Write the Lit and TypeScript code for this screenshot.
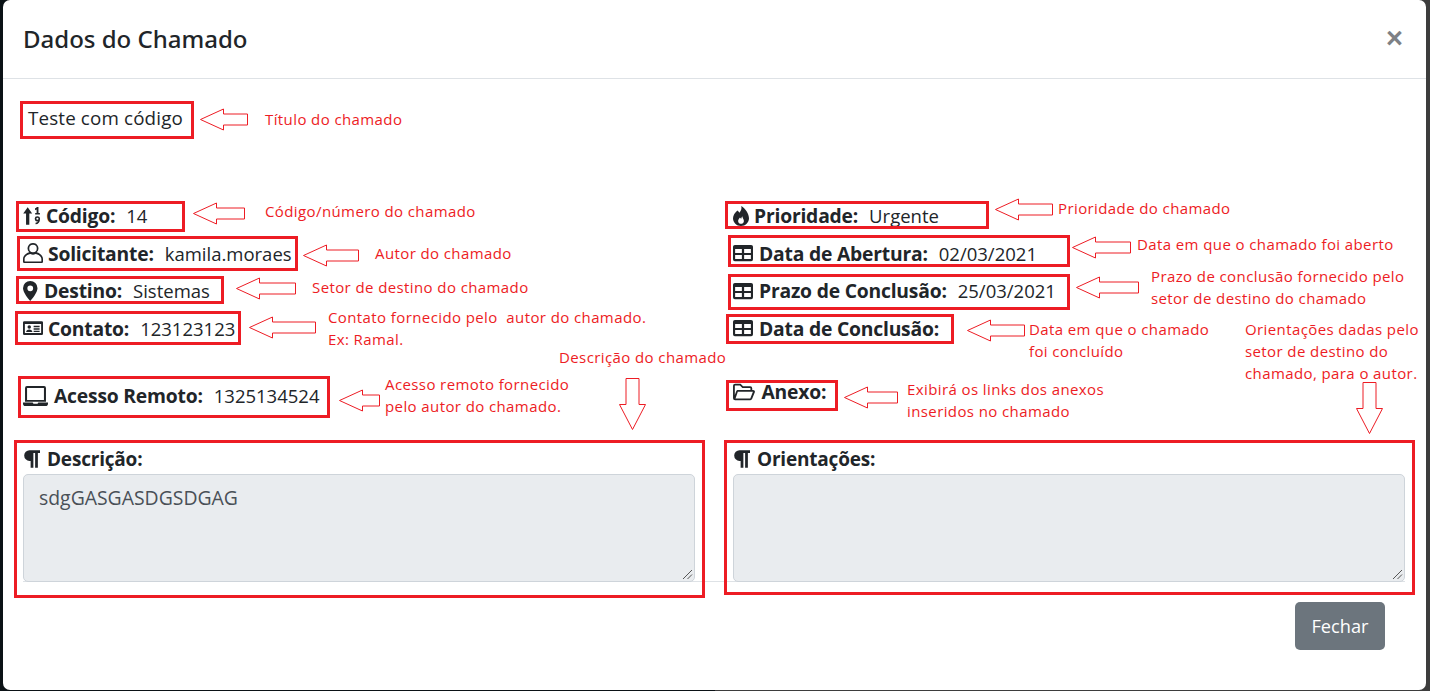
import { LitElement, html, css, svg } from "lit";
import { customElement } from "lit/decorators.js";

type Icon = { w: number; h: number; vb: string; mr: number; d: unknown };

const ICONS: Record<string, Icon> = {
  sort: { w: 17, h: 20, vb: "0 0 14.5 16", mr: 6, d: svg`<path d="M4 .6 L7.8 5.8 H5.4 V15.400 H2.6 V5.800 H.2 Z"/><path d="M10.2 1.600 L12 .4 H13.2 V5.400 H14.400 V6.800 H10.400 V5.400 H11.600 V2.400 L10.400 3 Z"/><path fill-rule="evenodd" d="M12.300 8.200a2.200 2.200 0 0 1 2.200 2.500c0 2.500-1.400 4.300-3.800 4.300v-1.300c1 0 1.800-.4 2.200-1.200a2.200 2.200 0 1 1-.6-4.300zm0 1.300a.9.9 0 1 0 0 1.800.9.9 0 0 0 0-1.800z"/>` },
  user: { w: 20, h: 20, vb: "0 0 16 16", mr: 5, d: svg`<path fill-rule="evenodd" d="M8 0a4.300 4.300 0 0 1 3 7.400c2.600.8 5 2.900 5 5.400V15a1 1 0 0 1-1 1H1a1 1 0 0 1-1-1v-2.200c0-2.500 2.400-4.600 5-5.400A4.300 4.300 0 0 1 8 0zm0 1.300a3 3 0 1 0 0 6 3 3 0 0 0 0-6zM6 8.800c-2.400.4-4.700 1.900-4.700 4V14.700h13.400V12.800c0-2.100-2.300-3.600-4.700-4-1.200.7-2.800.7-4 0z"/>` },
  pin: { w: 14.500, h: 20, vb: "2.200 0 11.600 16", mr: 6.500, d: svg`<path fill-rule="evenodd" d="M8 0a5.800 5.800 0 0 1 5.800 5.800C13.800 9 9.500 14.500 8 16 6.500 14.500 2.200 9 2.200 5.800A5.800 5.800 0 0 1 8 0zm0 3.500a2.300 2.300 0 1 0 0 4.600 2.300 2.300 0 0 0 0-4.600z"/>` },
  card: { w: 20, h: 20, vb: "0 0 16 16", mr: 5, d: svg`<path fill-rule="evenodd" d="M1 2.500h14a1 1 0 0 1 1 1v9a1 1 0 0 1-1 1H1a1 1 0 0 1-1-1v-9a1 1 0 0 1 1-1zM1.500 4.800v7.200H14.500V4.800zM5 5.800a1.400 1.400 0 1 1 0 2.800A1.400 1.400 0 0 1 5 5.800zM2.500 11.200c0-1.300 1.100-2.100 2.500-2.100s2.500.8 2.500 2.100zM8.500 6.200h4.800v1.100H8.500zM8.500 8.200h4.800v1.100H8.500zM8.500 10.200h4.800v1H8.500z"/>` },
  laptop: { w: 25, h: 20, vb: "0 1 16 12.800", mr: 6, d: svg`<path fill-rule="evenodd" d="M2.500 1h11a1.200 1.200 0 0 1 1.200 1.200V11H1.300V2.200A1.200 1.200 0 0 1 2.500 1zm.1 1.300V9.900h10.800V2.300z"/><path d="M0 11.600h6.200l.5.7h2.600l.5-.7H16v.7c0 .8-.7 1.500-1.500 1.500h-13C.7 13.800 0 13.100 0 12.300z"/>` },
  fire: { w: 16, h: 20, vb: "1.600 0 12.800 16", mr: 5, d: svg`<path fill-rule="evenodd" d="M8.200 0c.6 2.500-.3 3.900-1.500 5.300-.4-.8-.9-1.300-1.600-1.800C3.200 5.300 1.600 7.300 1.600 9.800 1.600 13.300 4.500 16 8 16s6.400-2.700 6.400-6.200C14.400 5.900 11.400 2 8.200 0zM8 14.200c-1.300 0-2.300-1-2.300-2.300 0-1.100.8-1.700 1.500-2.700.3.500.5.800 1 1 .2-.9.400-1.400.8-2 .2 1.500 1.300 2.400 1.300 3.700C10.300 13.200 9.300 14.200 8 14.200z"/>` },
  table: { w: 20, h: 20, vb: "0 0 16 16", mr: 6, d: svg`<path fill-rule="evenodd" d="M1.500 1.500h13A1.500 1.500 0 0 1 16 3v10a1.500 1.500 0 0 1-1.500 1.500h-13A1.500 1.500 0 0 1 0 13V3a1.500 1.500 0 0 1 1.500-1.500zM1.700 4.800v3.100h5.400V4.800zm7.200 0v3.100h5.400V4.800zM1.700 9.500v3.300h5.400V9.500zm7.200 0v3.300h5.400V9.500z"/>` },
  folder: { w: 22, h: 20, vb: "0 .7 16 14.600", mr: 6.500, d: svg`<path fill-rule="evenodd" d="M1.500 2h4l1.800 1.800h5.200A1.500 1.500 0 0 1 14 5.300V6.500h.7c.9 0 1.500.9 1.200 1.700l-2 5a1.400 1.400 0 0 1-1.300.8H1.500A1.500 1.500 0 0 1 0 12.500v-9A1.500 1.500 0 0 1 1.500 2zm0 1.300a.2.200 0 0 0-.2.200v6.700l1-2.800c.2-.5.700-.9 1.300-.9h9.100V5.300a.2.200 0 0 0-.2-.2H6.800L5 3.300zM3.500 7.800 1.800 12.700h10.800l1.900-4.900z"/>` },
  para: { w: 17, h: 20, vb: "0 0 13.600 16", mr: 7, d: svg`<path d="M5.200 1H13.600v2.200h-1.700V15h-2.200V3.200H8.300V15H6.100V9.500H5.200a4.250 4.250 0 0 1 0-8.500z"/>` },
};

const icon = (name: string) => {
  const i = ICONS[name];
  return html`<svg class="ico" style="width:${i.w}px;height:${i.h}px;margin-right:${i.mr}px" viewBox=${i.vb} fill="currentColor" aria-hidden="true">${i.d}</svg>`;
};

const field = (name: string, label: string, value = "") =>
  html`<div class="field">${icon(name)}<b>${label}:</b>${value ? html`<span class="val">${value}</span>` : ""}</div>`;

// Red rectangles drawn by hand on top of the screenshot
const BOXES = [
  [20, 101, 174, 38], [16, 201, 169, 31], [17, 236, 281, 35], [16, 276, 208, 28], [15, 311, 226, 34], [18, 376, 312, 42],
  [725, 201, 264, 28], [728, 235, 342, 32], [728, 274, 342, 36], [726, 314, 228, 30], [726, 380, 112, 31],
  [14, 440, 691, 158], [724, 440, 691, 155],
];

// Hand-drawn outline arrows: tip x, tip y, total length
const ARROWS_L = [[200, 119, 47], [193, 213, 51], [303, 255, 55], [236, 288, 59], [249, 327, 66], [339, 400, 40], [995, 209, 57], [1072, 247, 58], [1076, 287, 62], [967, 330, 57], [844, 397, 53]];
const ARROWS_D = [[632, 429], [1369, 433]];

const NOTES: [number, number, string][] = [
  [265, 110, "Título do chamado"],
  [265, 202, "Código/número do chamado"],
  [375, 244, "Autor do chamado"],
  [312, 278, "Setor de destino do chamado"],
  [328, 308, "Contato fornecido pelo  autor do chamado."],
  [328, 330, "Ex: Ramal."],
  [559, 348, "Descrição do chamado"],
  [385, 375, "Acesso remoto fornecido"],
  [385, 397, "pelo autor do chamado."],
  [1058, 199, "Prioridade do chamado"],
  [1137, 235, "Data em que o chamado foi aberto"],
  [1151, 267, "Prazo de conclusão fornecido pelo"],
  [1151, 289, "setor de destino do chamado"],
  [1029, 320, "Data em que o chamado"],
  [1029, 342, "foi concluído"],
  [907, 380, "Exibirá os links dos anexos"],
  [907, 402, "inseridos no chamado"],
  [1245, 320, "Orientações dadas pelo"],
  [1245, 342, "setor de destino do"],
  [1245, 364, "chamado, para o autor."],
];

@customElement("app-root")
export class AppRoot extends LitElement {
  static styles = css`
    :host { display: block; width: 1430px; height: 691px; position: relative; overflow: hidden; background: linear-gradient(to right, #0b1216 50%, #3d3d3d 50%); font-family: "Open Sans", "Noto Sans", sans-serif; color: #212529; }
    * { box-sizing: border-box; }
    .modal { width: 1423px; height: 690px; margin-left: 3px; background: #fff; border-radius: 7px; display: flex; flex-direction: column; }
    .head { height: 79px; flex: none; border-bottom: 1px solid #dee2e6; display: flex; align-items: center; justify-content: space-between; padding: 1px 23px 0 20px; }
    h5 { margin: 0; font-family: "Noto Sans", sans-serif; font-size: 24px; font-weight: 500; line-height: 1.2; }
    .close { font-size: 29px; font-weight: 700; color: #7d8185; line-height: 1; font-family: "Liberation Sans", sans-serif; margin-top: -2px; }
    .body { flex: 1; padding: 0 21px 0 20px; }
    .title { height: 79px; padding: 27px 0 0 5px; font-size: 18.800px; line-height: 24px; letter-spacing: .15px; }
    .cols { display: grid; grid-template-columns: 672px 672px; column-gap: 38px; }
    .top { margin-top: 39px; }
    .bottom { margin-top: 30px; }
    .col { display: flex; flex-direction: column; }
    .field { display: flex; align-items: center; height: 37.500px; font-size: 19.300px; white-space: pre; }
    .field b { font-weight: 700; letter-spacing: -.2px; }
    .ico { flex: none; }
    .val { margin-left: 11px; font-size: 18.500px; }
    .gap-l { margin-top: 30px; }
    .gap-r { margin-top: 26px; }
    .desc { font-size: 19px; font-weight: 700; height: 29px; display: flex; align-items: center; letter-spacing: -.2px; }
    .ta { height: 108px; background: #e9ecef; border: 1px solid #ced4da; border-radius: 5px; color: #495057; padding: 11px 15px; font-size: 19.400px; line-height: 24px; position: relative; }
    .grip { position: absolute; right: 1px; bottom: 1px; width: 12px; height: 12px; }
    .foot { display: flex; justify-content: flex-end; margin-top: -1px; border-top: 1px solid #dee2e6; padding: 20px 20px 0 0; }
    .btn { width: 90px; height: 48px; background: #6c757d; color: #fff; border-radius: 5px; display: flex; align-items: center; justify-content: center; font-size: 18.200px; }
    .overlay { position: absolute; inset: 0; pointer-events: none; }
    .box { position: absolute; border: 3px solid #ed1c24; }
    .note { position: absolute; color: #ed1c24; font-size: 15px; letter-spacing: .4px; line-height: 19px; white-space: pre; }
    .arrow { position: absolute; overflow: visible; left: 0; top: 0; }
  `;

  render() {
    const grip = html`<svg class="grip" viewBox="0 0 12 12"><path d="M11 2 2 11M11 6.500 6.500 11" stroke="#555" stroke-width="1"/></svg>`;
    return html`
      <div class="modal">
        <div class="head"><h5>Dados do Chamado</h5><span class="close">×</span></div>
        <div class="body">
          <div class="title">Teste com código</div>
          <div class="cols top">
            <div class="col">
              ${field("sort", "Código", "14")}
              ${field("user", "Solicitante", "kamila.moraes")}
              ${field("pin", "Destino", "Sistemas")}
              ${field("card", "Contato", "123123123")}
              <div class="gap-l">${field("laptop", "Acesso Remoto", "1325134524")}</div>
            </div>
            <div class="col">
              ${field("fire", "Prioridade", "Urgente")}
              ${field("table", "Data de Abertura", "02/03/2021")}
              ${field("table", "Prazo de Conclusão", "25/03/2021")}
              ${field("table", "Data de Conclusão")}
              <div class="gap-r">${field("folder", "Anexo")}</div>
            </div>
          </div>
          <div class="cols bottom">
            <div><div class="desc">${icon("para")}Descrição:</div><div class="ta">sdgGASGASDGSDGAG${grip}</div></div>
            <div><div class="desc">${icon("para")}Orientações:</div><div class="ta">${grip}</div></div>
          </div>
          <div class="foot"><div class="btn">Fechar</div></div>
        </div>
      </div>
      <div class="overlay">
        ${BOXES.map(([l, t, w, h]) => html`<div class="box" style="left:${l}px;top:${t}px;width:${w}px;height:${h}px"></div>`)}
        <svg class="arrow" width="1430" height="691" fill="#fff" stroke="#ed1c24" stroke-width="1">
          ${ARROWS_L.map(([x, y, L]) => svg`<path d="M${x + .5} ${y + .5} l23 -10.500 v5 h${L - 23} v11 h-${L - 23} v5 z"/>`)}
          ${ARROWS_D.map(([x, y]) => svg`<path d="M${x + .5} ${y + .5} l-13 -25 h6.500 v-26 h13 v26 h6.500 z"/>`)}
        </svg>
        ${NOTES.map(([l, t, s]) => html`<div class="note" style="left:${l}px;top:${t}px">${s}</div>`)}
      </div>
    `;
  }
}
